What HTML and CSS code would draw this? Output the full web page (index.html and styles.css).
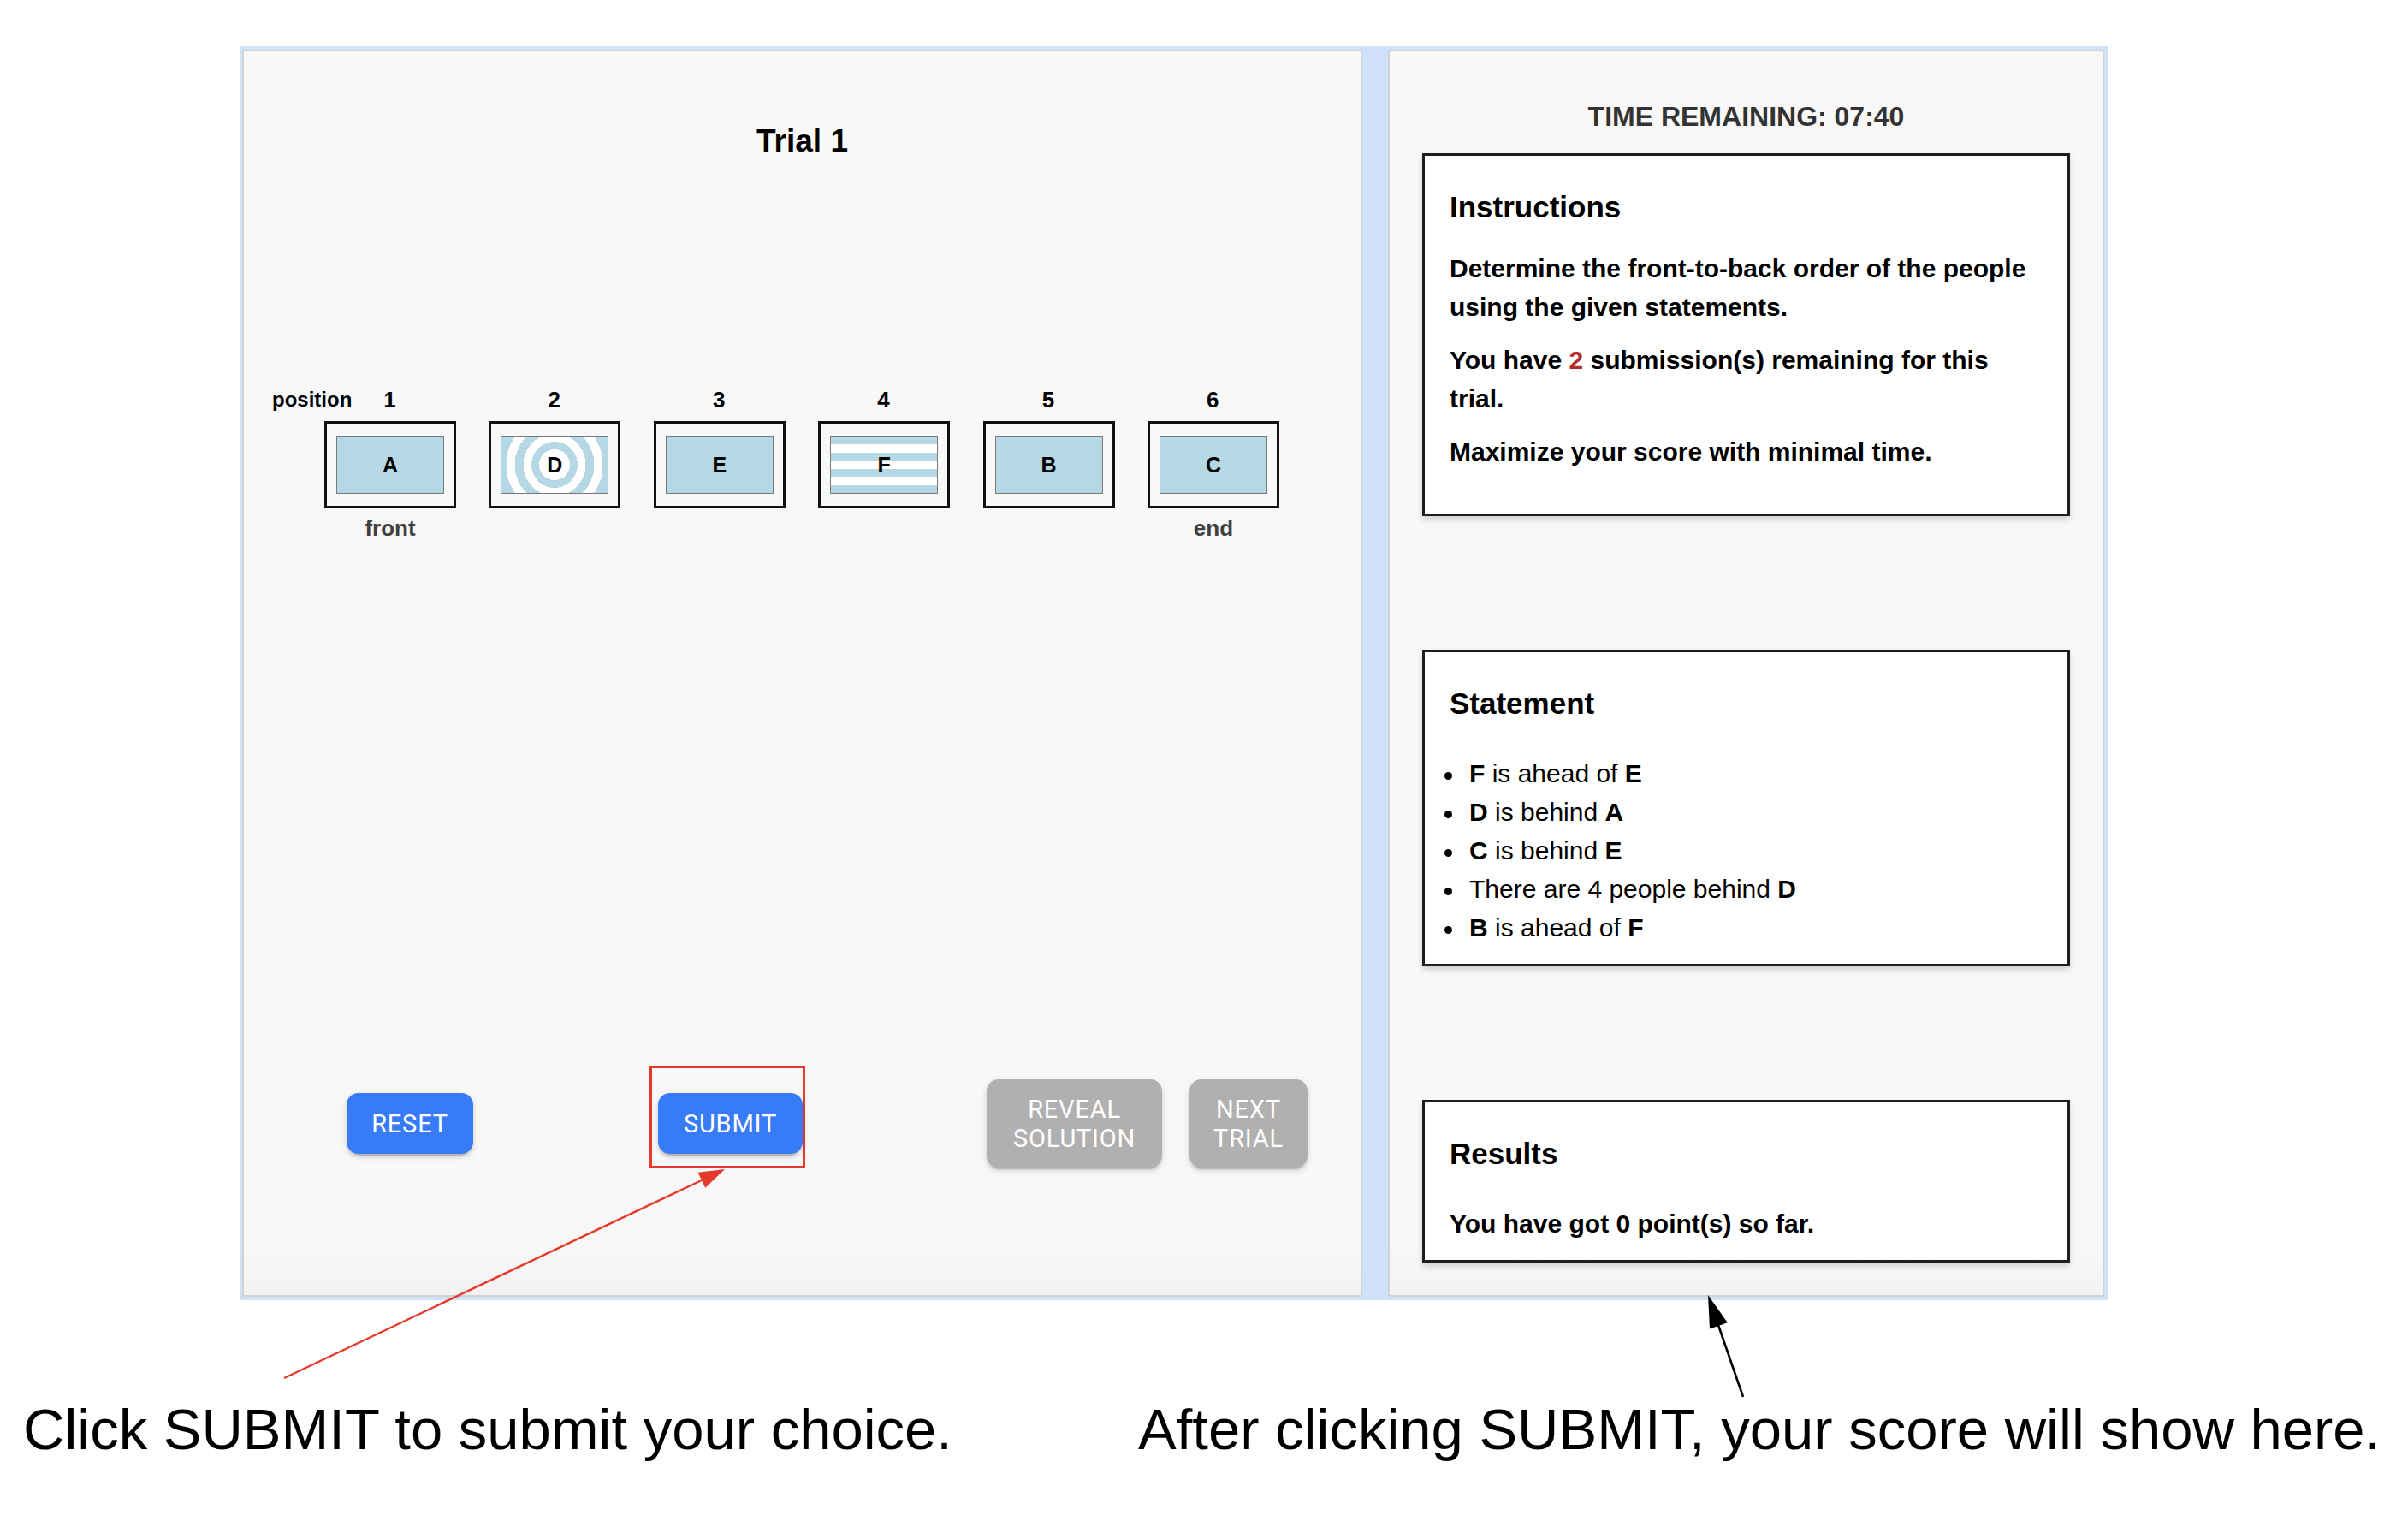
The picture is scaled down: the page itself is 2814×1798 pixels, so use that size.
FILE: index.html
```html
<!DOCTYPE html>
<html lang="en">
<head>
<meta charset="utf-8">
<title>Trial 1</title>
<link rel="stylesheet" href="styles.css">
</head>
<body>
<div class="page">
  <div class="frame">
    <section class="panel panel-left">
      <h1 class="trial-title">Trial 1</h1>
      <div class="pos-row">
        <span class="pos-label">position</span>
        <span class="pos-num">1</span>
        <span class="pos-num">2</span>
        <span class="pos-num">3</span>
        <span class="pos-num">4</span>
        <span class="pos-num">5</span>
        <span class="pos-num">6</span>
      </div>
      <div class="slot-row">
        <div class="slot"><div class="person">A</div></div>
        <div class="slot"><div class="person person-rings">D</div></div>
        <div class="slot"><div class="person">E</div></div>
        <div class="slot"><div class="person person-stripes">F</div></div>
        <div class="slot"><div class="person">B</div></div>
        <div class="slot"><div class="person">C</div></div>
      </div>
      <div class="end-row">
        <span class="end-cell">front</span>
        <span class="end-cell"></span>
        <span class="end-cell"></span>
        <span class="end-cell"></span>
        <span class="end-cell"></span>
        <span class="end-cell">end</span>
      </div>
      <div class="btn-row">
        <button class="btn btn-blue btn-reset">RESET</button>
        <div class="highlight"><button class="btn btn-blue btn-submit">SUBMIT</button></div>
        <button class="btn btn-gray btn-reveal">REVEAL<br>SOLUTION</button>
        <button class="btn btn-gray btn-next">NEXT<br>TRIAL</button>
      </div>
    </section>
    <section class="panel panel-right">
      <div class="timer">TIME REMAINING: 07:40</div>
      <div class="info-box box-instructions">
        <h2 class="box-title">Instructions</h2>
        <p class="info-text first">Determine the front-to-back order of the people using the given statements.</p>
        <p class="info-text">You have <span class="count">2</span> submission(s) remaining for this trial.</p>
        <p class="info-text">Maximize your score with minimal time.</p>
      </div>
      <div class="info-box box-statement">
        <h2 class="box-title">Statement</h2>
        <ul class="statements">
          <li><b>F</b> is ahead of <b>E</b></li>
          <li><b>D</b> is behind <b>A</b></li>
          <li><b>C</b> is behind <b>E</b></li>
          <li>There are 4 people behind <b>D</b></li>
          <li><b>B</b> is ahead of <b>F</b></li>
        </ul>
      </div>
      <div class="info-box box-results">
        <h2 class="box-title">Results</h2>
        <p class="info-text result-text">You have got 0 point(s) so far.</p>
      </div>
    </section>
  </div>
  <div class="captions">
    <p class="caption">Click SUBMIT to submit your choice.</p>
    <p class="caption">After clicking SUBMIT, your score will show here.</p>
  </div>
  <svg class="arrows" width="2814" height="1798" viewBox="0 0 2814 1798">
    <line x1="332" y1="1610" x2="824" y2="1377" stroke="#e5392b" stroke-width="2.4"/>
    <polygon points="847,1366 824.2,1387.8 815.6,1369.8" fill="#e5392b"/>
    <line x1="2037" y1="1632" x2="2008" y2="1548" stroke="#000" stroke-width="2.6"/>
    <polygon points="1996,1513 2018.8,1545.3 1998,1552.5" fill="#000"/>
  </svg>
</div>
</body>
</html>
```

FILE: styles.css
```css
* {
  box-sizing: border-box;
}

html, body {
  margin: 0;
  padding: 0;
  background: #ffffff;
}

body {
  font-family: "Liberation Sans", Arial, sans-serif;
  color: #000;
}

.page {
  position: relative;
  width: 2814px;
  height: 1798px;
  padding-top: 54px;
}

.frame {
  display: flex;
  gap: 30px;
  width: 2184px;
  margin-left: 280px;
  padding: 4px 5px 4px 3px;
  background: #cfe2f9;
}

.panel {
  height: 1457px;
  background: linear-gradient(to bottom, #f8f8f8 0, #f8f8f8 96%, #f2f2f2 100%);
  border: 2px solid #d2d2d2;
  display: flex;
  flex-direction: column;
}

.panel-left {
  width: 1309px;
}

.panel-right {
  width: 837px;
  padding: 0 38px;
}

/* ---------- left panel ---------- */
.trial-title {
  margin: 83px 0 0;
  font-size: 37px;
  line-height: 44px;
  font-weight: bold;
  text-align: center;
}

.pos-row {
  display: flex;
  gap: 38.4px;
  margin-top: 264px;
  padding-left: 33px;
  height: 32px;
  line-height: 32px;
}

.pos-label {
  flex: none;
  width: 22px;
  white-space: nowrap;
  font-size: 24px;
  font-weight: bold;
}

.pos-num {
  flex: none;
  width: 154px;
  text-align: center;
  font-size: 26px;
  font-weight: bold;
}

.slot-row {
  display: flex;
  gap: 38.4px;
  margin-top: 9px;
  padding-left: 94px;
}

.slot {
  flex: none;
  width: 154px;
  height: 102px;
  border: 3px solid #111;
  display: flex;
  align-items: center;
  justify-content: center;
}

.person {
  width: 126px;
  height: 68px;
  border: 1px solid #7a7a7a;
  background: #b6d8e4;
  display: flex;
  align-items: center;
  justify-content: center;
  font-size: 25px;
  font-weight: bold;
}

.person-rings {
  background: radial-gradient(circle at center,
    #ffffff 0 18px,
    #b6d8e4 18px 27px,
    #ffffff 27px 36.5px,
    #b6d8e4 36.5px 46.5px,
    #ffffff 46.5px 56.5px,
    #b6d8e4 56.5px);
}

.person-stripes {
  background: repeating-linear-gradient(to bottom,
    #b6d8e4 0 9.43px,
    #ffffff 9.43px 18.86px);
}

.end-row {
  display: flex;
  gap: 38.4px;
  margin-top: 7px;
  padding-left: 94px;
  height: 32px;
  line-height: 32px;
}

.end-cell {
  flex: none;
  width: 154px;
  text-align: center;
  font-size: 26px;
  font-weight: bold;
  color: #404040;
}

.btn-row {
  display: flex;
  align-items: flex-start;
  margin-top: 612px;
  padding-left: 120px;
}

.btn {
  flex: none;
  border: none;
  border-radius: 14px;
  color: #ffffff;
  font-family: Roboto, "Liberation Sans", sans-serif;
  font-size: 29px;
  font-weight: 400;
  letter-spacing: 0.8px;
  line-height: 34px;
  padding: 0;
  text-align: center;
  box-shadow: 0 6px 2px -4px rgba(0, 0, 0, 0.16),
              0 4px 4px 0 rgba(0, 0, 0, 0.10),
              0 2px 10px 0 rgba(0, 0, 0, 0.10);
}

.btn-blue {
  background: #377cf6;
}

.btn-gray {
  background: #b0b0b0;
}

.btn-reset {
  width: 148px;
  height: 71px;
  margin-top: 32px;
}

.highlight {
  flex: none;
  width: 182px;
  margin-left: 206px;
  border: 3px solid #e53a2b;
  padding: 29px 0 14px 7px;
}

.btn-submit {
  display: block;
  width: 169px;
  height: 71px;
}

.btn-reveal {
  width: 205px;
  height: 103px;
  margin-left: 212px;
  margin-top: 16px;
}

.btn-next {
  width: 138px;
  height: 103px;
  margin-left: 32px;
  margin-top: 16px;
}

/* ---------- right panel ---------- */
.timer {
  margin-top: 57px;
  font-size: 32px;
  line-height: 38px;
  font-weight: bold;
  color: #333333;
  text-align: center;
}

.info-box {
  background: #ffffff;
  border: 3px solid #1e1e1e;
  padding: 39px 32px 0 29px;
  box-shadow: 0 4px 7px rgba(0, 0, 0, 0.16);
}

.box-instructions {
  margin-top: 24px;
  height: 424px;
}

.box-statement {
  margin-top: 156px;
  height: 370px;
}

.box-results {
  margin-top: 156px;
  height: 190px;
}

.box-title {
  margin: 0;
  font-size: 35px;
  line-height: 42px;
  font-weight: bold;
}

.info-text {
  margin: 0 0 17px;
  font-size: 30px;
  line-height: 45px;
  font-weight: bold;
}

.info-text.first {
  margin-top: 28px;
}

.count {
  color: #b32d2d;
}

.result-text {
  margin-top: 38px;
}

.statements {
  list-style: none;
  margin: 38px 0 0 -6px;
  padding: 0;
  font-size: 30px;
  line-height: 45px;
}

.statements li::before {
  content: "";
  display: inline-block;
  width: 9px;
  height: 9px;
  border-radius: 50%;
  background: #000;
  margin-right: 20px;
  vertical-align: middle;
}

/* ---------- annotations ---------- */
.captions {
  display: grid;
  grid-template-columns: 1303px auto;
  margin-top: 112px;
  padding-left: 27px;
}

.caption {
  margin: 0;
  font-size: 67px;
  line-height: 77px;
  white-space: nowrap;
}

.arrows {
  position: absolute;
  left: 0;
  top: 0;
  pointer-events: none;
}
```
